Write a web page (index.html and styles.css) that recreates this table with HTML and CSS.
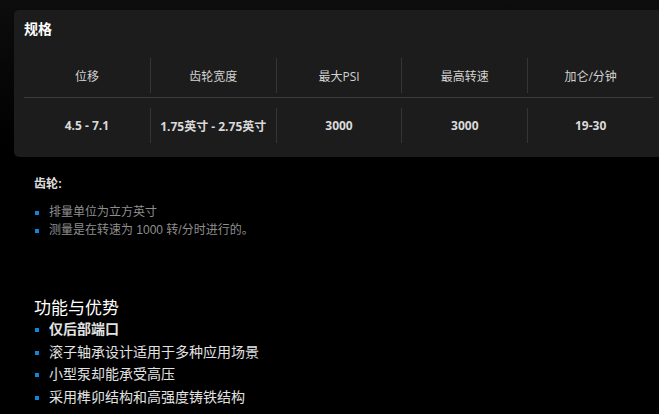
FILE: index.html
```html
<!DOCTYPE html>
<html lang="zh-CN">
<head>
    <meta charset="UTF-8">
    <meta name="viewport" content="width=device-width, initial-scale=1.0">
    <title>规格</title>
    <link rel="stylesheet" href="styles.css">
</head>
<body>
    <div class="specs-wrap">
        <div class="specs-card">
            <h2 class="specs-title">规格</h2>

            <div class="specs-table">
                <div class="specs-row specs-head">
                    <div class="cell">位移</div>
                    <div class="cell">齿轮宽度</div>
                    <div class="cell">最大PSI</div>
                    <div class="cell">最高转速</div>
                    <div class="cell">加仑/分钟</div>
                </div>
                <div class="specs-row specs-data">
                    <div class="cell">4.5 - 7.1</div>
                    <div class="cell">1.75英寸 - 2.75英寸</div>
                    <div class="cell">3000</div>
                    <div class="cell">3000</div>
                    <div class="cell">19-30</div>
                </div>
            </div>
        </div>
    </div>

    <div class="content">
        <p class="gear-title">齿轮:</p>
        <ul class="gear-list">
            <li>排量单位为立方英寸</li>
            <li>测量是在转速为 1000 转/分时进行的。</li>
        </ul>

        <h3 class="features-title">功能与优势</h3>
        <ul class="features-list">
            <li><strong>仅后部端口</strong></li>
            <li>滚子轴承设计适用于多种应用场景</li>
            <li>小型泵却能承受高压</li>
            <li>采用榫卯结构和高强度铸铁结构</li>
        </ul>
    </div>
</body>
</html>
```

FILE: styles.css
```css
body {
    margin: 0;
    background-color: #000;
    font-family: "Liberation Sans", "Noto Sans CJK SC", sans-serif;
    overflow: hidden;
}

.specs-wrap {
    padding: 10px 0 0 14px;
    background: linear-gradient(#0d0d0d, #000 150px);
}

.specs-card {
    width: 649px;
    background-color: #1c1c1c;
    border-radius: 5px;
    padding: 9px 10px 14px 10px;
}

.specs-title {
    margin: 0;
    font-family: "Open Sans", "Noto Sans CJK SC", sans-serif;
    font-size: 14px;
    line-height: 20px;
    font-weight: bold;
    color: #fff;
}

.specs-table {
    width: 629px;
    margin-top: 8px;
}

.specs-row {
    display: grid;
    grid-template-columns: repeat(5, 1fr);
}

.specs-head {
    padding: 11px 0 4px;
    border-bottom: 1px solid #3a3a3a;
}

.specs-data {
    padding: 10px 0 0;
}

.cell {
    height: 35px;
    display: flex;
    align-items: center;
    justify-content: center;
    font-family: "Open Sans", "Noto Sans CJK SC", sans-serif;
    font-size: 12px;
    color: #d2d2d2;
    border-left: 1px solid #353535;
}

.cell:first-child {
    border-left: none;
}

.specs-data .cell {
    font-weight: bold;
    color: #dadada;
}

.content {
    padding: 18px 0 0 34px;
}

.gear-title {
    margin: 0;
    font-size: 12px;
    line-height: 18px;
    font-weight: bold;
    color: #dedede;
}

.gear-list,
.features-list {
    list-style: none;
    margin: 0;
    padding: 0;
}

.gear-list {
    margin-top: 10px;
}

.gear-list li {
    position: relative;
    padding-left: 15px;
    font-size: 12px;
    line-height: 18px;
    color: #8f8f8f;
}

.gear-list li::before,
.features-list li::before {
    content: "";
    position: absolute;
    left: 1px;
    width: 4px;
    height: 4px;
    background-color: #0b88d8;
}

.gear-list li::before {
    top: 8px;
}

.features-title {
    margin: 60px 0 -1px;
    font-size: 17px;
    line-height: 20px;
    font-weight: normal;
    color: #fff;
}

.features-list li {
    position: relative;
    padding-left: 15px;
    font-size: 14px;
    line-height: 22.7px;
    color: #e2e2e2;
}

.features-list li::before {
    top: 10px;
}
```
